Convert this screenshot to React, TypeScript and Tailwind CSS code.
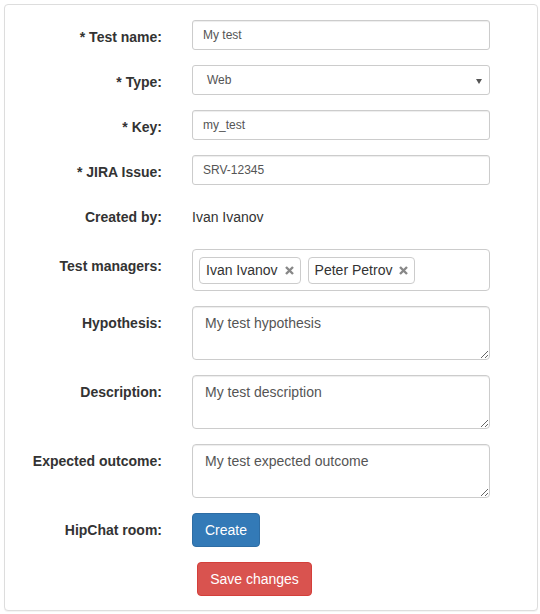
import React from "react";

const font = { fontFamily: '"Liberation Sans", Arial, sans-serif' };

function Label({ children }: { children: React.ReactNode }) {
  return (
    <div className="w-[157px] shrink-0 pt-[7px] text-right text-[14px] leading-[20px] font-bold text-[#333]">
      {children}
    </div>
  );
}

function Row({ label, children }: { label: string; children: React.ReactNode }) {
  return (
    <div className="flex gap-[30px]">
      <Label>{label}</Label>
      <div className="w-[298px]">{children}</div>
    </div>
  );
}

function TextInput({ value }: { value: string }) {
  return (
    <input
      readOnly
      value={value}
      className="block h-[30px] w-full rounded-[3px] border border-[#ccc] bg-white px-[10px] text-[12px] text-[#555] shadow-[inset_0_1px_1px_rgba(0,0,0,0.075)] outline-none"
    />
  );
}

function TextArea({ value }: { value: string }) {
  return (
    <textarea
      readOnly
      value={value}
      className="block h-[54px] w-full rounded-[4px] border border-[#ccc] bg-white px-[12px] py-[6px] text-[14px] leading-[20px] text-[#555] shadow-[inset_0_1px_1px_rgba(0,0,0,0.075)] outline-none"
    />
  );
}

function Tag({ name }: { name: string }) {
  return (
    <span className="flex h-[27px] items-center gap-[7px] rounded-[4px] border border-[#ccc] bg-white pl-[6px] pr-[6px] text-[14px] text-[#333]">
      {name}
      <svg width="9" height="9" viewBox="0 0 9 9" className="mt-[1px]">
        <path d="M1 1 L8 8 M8 1 L1 8" stroke="#888" strokeWidth="2.4" />
      </svg>
    </span>
  );
}

export default function App() {
  return (
    <div className="p-1" style={font}>
      <div className="flex w-[534px] flex-col gap-[15px] rounded-[4px] border border-[#ddd] bg-white pt-[15px] pb-[14px] shadow-[0_1px_1px_rgba(0,0,0,0.05)]">
        <Row label="* Test name:">
          <TextInput value="My test" />
        </Row>
        <Row label="* Type:">
          <div className="relative flex h-[30px] items-center rounded-[3px] border border-[#ccc] bg-white pl-[14px] text-[12px] text-[#555]">
            Web
            <svg width="6" height="5" viewBox="0 0 6 5" className="absolute top-[13px] right-[7px]">
              <path d="M0 0 H6 L3 5 Z" fill="#555" />
            </svg>
          </div>
        </Row>
        <Row label="* Key:">
          <TextInput value="my_test" />
        </Row>
        <Row label="* JIRA Issue:">
          <TextInput value="SRV-12345" />
        </Row>
        <Row label="Created by:">
          <div className="min-h-[34px] pt-[7px] text-[14px] leading-[20px] text-[#333]">Ivan Ivanov</div>
        </Row>
        <Row label="Test managers:">
          <div className="flex h-[42px] items-center gap-[7px] rounded-[4px] border border-[#ccc] bg-white px-[6px]">
            <Tag name="Ivan Ivanov" />
            <Tag name="Peter Petrov" />
          </div>
        </Row>
        <Row label="Hypothesis:">
          <TextArea value="My test hypothesis" />
        </Row>
        <Row label="Description:">
          <TextArea value="My test description" />
        </Row>
        <Row label="Expected outcome:">
          <TextArea value="My test expected outcome" />
        </Row>
        <Row label="HipChat room:">
          <button className="h-[34px] w-[68px] rounded-[4px] border border-[#2e6da4] bg-[#337ab7] text-[14px] text-white">
            Create
          </button>
        </Row>
        <div className="pl-[192px]">
          <button className="h-[34px] w-[115px] rounded-[4px] border border-[#d43f3a] bg-[#d9534f] text-[14px] text-white">
            Save changes
          </button>
        </div>
      </div>
    </div>
  );
}
